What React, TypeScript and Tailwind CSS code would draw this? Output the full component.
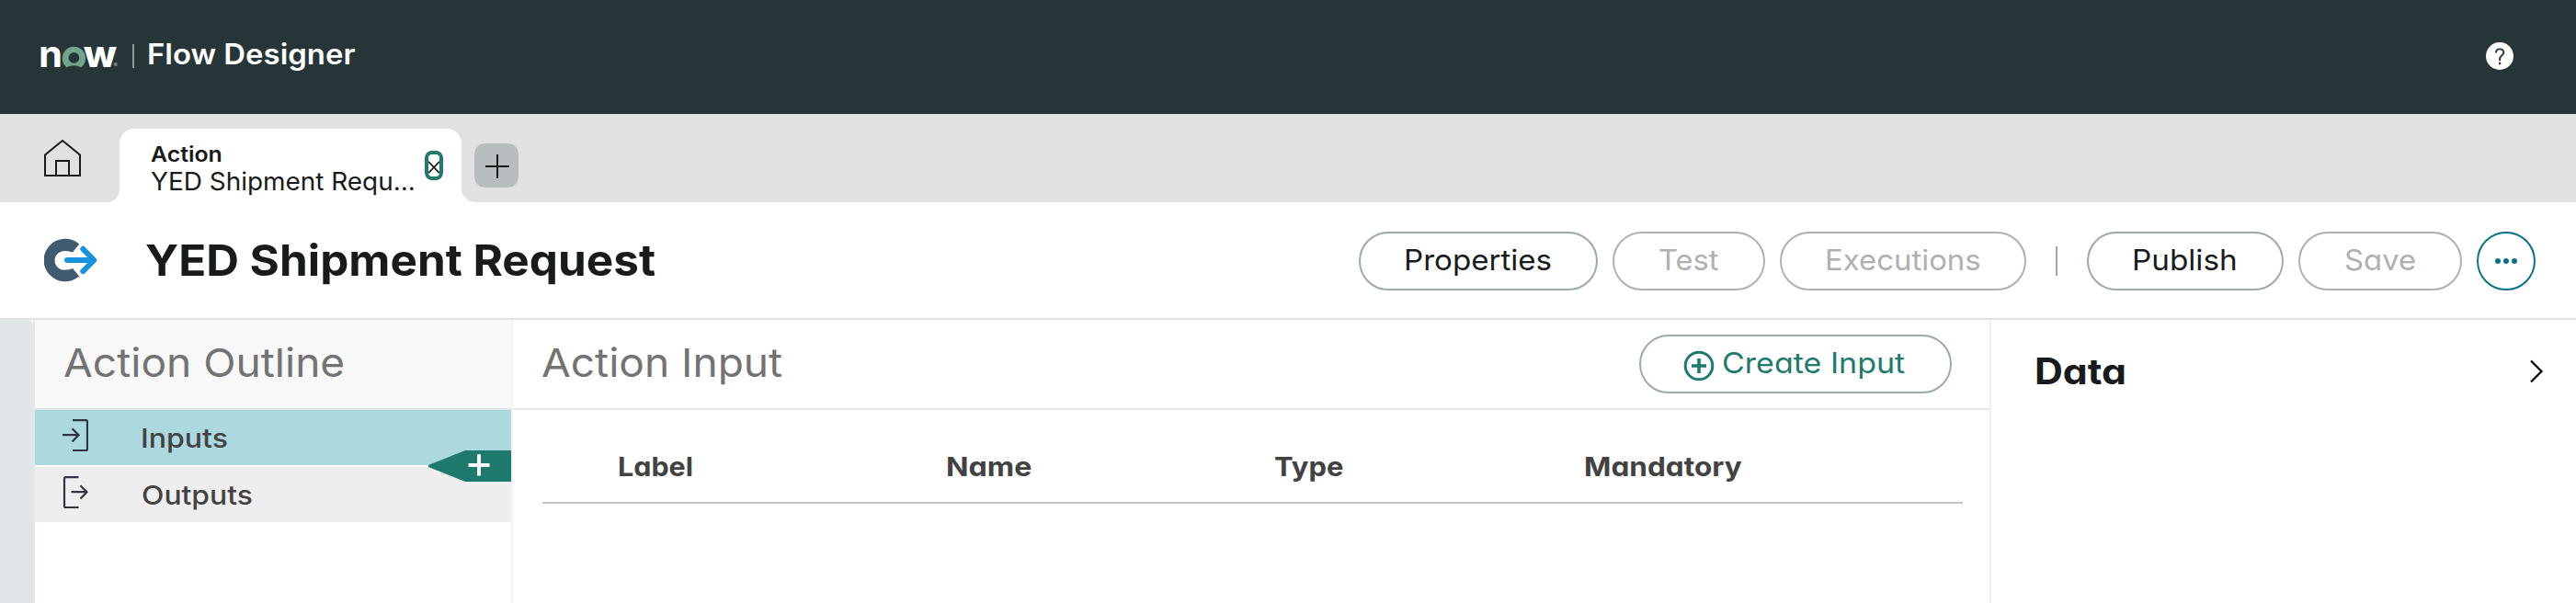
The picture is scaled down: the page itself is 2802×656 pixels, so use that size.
import React from "react";
import type { ReactNode } from "react";

function NowLogo() {
  return (
    <svg width="98" height="70" viewBox="-6 -20 98 70" className="block shrink-0">
      <text x="-2" y="25" fill="#fff" fontFamily="Inter, sans-serif" fontSize="40" fontWeight="700" textLength="26" lengthAdjust="spacingAndGlyphs">n</text>
      <text x="47" y="25" fill="#fff" fontFamily="Inter, sans-serif" fontSize="40" fontWeight="800" textLength="36" lengthAdjust="spacingAndGlyphs">w</text>
      <path
        fillRule="evenodd"
        fill="#71a68a"
        d="M28.4 25.2 A12.6 12.6 0 1 1 44.4 25.2 Q36.4 21.2 28.4 25.2 Z M36.4 9 A5.9 5.9 0 1 0 36.4 20.8 A5.9 5.9 0 1 0 36.4 9 Z"
      />
      <text x="79.5" y="25" fill="#a8b0b1" fontFamily="Inter, sans-serif" fontSize="6.5">®</text>
    </svg>
  );
}

function TopBar() {
  return (
    <header className="flex h-[124px] items-start justify-between bg-[#253538] pl-[38px] pr-[68px]">
      <div className="flex">
        <div className="mt-[28px]"><NowLogo /></div>
        <div className="ml-[8px] mt-[48px] h-[26px] w-[2px] bg-[#8f9799]" />
        <span className="ml-[14px] mt-[39px] origin-left scale-x-[1.061] text-[31px] font-semibold leading-[40px] text-white">Flow Designer</span>
      </div>
      <div className="mt-[46px]">
        <svg width="30" height="30" viewBox="0 0 30 30" className="block">
          <circle cx="15" cy="15" r="15" fill="#fff" />
          <path d="M10.9 11.6 C10.9 8.9 12.6 7.4 15 7.4 C17.5 7.4 19.3 9 19.3 11.2 C19.3 12.7 18.5 13.6 17.2 14.6 C15.7 15.8 15.1 16.6 15.1 18.2 V20.2" fill="none" stroke="#253538" strokeWidth="1.9" />
          <rect x="14" y="21.8" width="2.2" height="2.4" fill="#253538" />
        </svg>
      </div>
    </header>
  );
}

function TabBar() {
  return (
    <nav className="flex h-[96px] bg-[#e0e1e3]">
      <div className="flex w-[130px] bg-white">
        <div className="w-[130px] rounded-br-[14px] bg-[#e0e1e3] pl-[48px] pt-[28px]">
          <svg width="40" height="40" viewBox="0 0 40 40" className="block" fill="none" stroke="#181b1c" strokeWidth="2">
            <path d="M1 39 V16.5 L20 1 L39 16.5 V39 Z" />
            <path d="M13 39 V23 H27 V39" />
          </svg>
        </div>
      </div>
      <div className="flex flex-1 bg-[linear-gradient(#e0e1e3_50%,#fff_50%)]">
        <div className="mt-[16px] flex h-[80px] w-[372px] rounded-t-[16px] bg-white pl-[34px]">
          <div className="flex w-[298px] flex-col items-start pt-[12px]">
            <span className="origin-left scale-x-[1.079] text-[23px] font-semibold leading-[32px]">Action</span>
            <span className="-mt-px origin-left scale-x-[1.034] whitespace-nowrap text-[27px] leading-[30px]">YED Shipment Requ...</span>
          </div>
          <div className="mt-[24px] flex h-[32px] w-[20px] items-center justify-center rounded-[8px] border-4 border-[#1f7a6c]">
            <svg width="12" height="14" viewBox="0 0 12 14" className="block translate-y-[2px]" stroke="#181b1c" strokeWidth="1.8" fill="none">
              <path d="M0 0.8 L12 13.2 M12 0.8 L0 13.2" />
            </svg>
          </div>
        </div>
        <div className="flex-1 rounded-bl-[15px] bg-[#e0e1e3] pl-[14px] pt-[32px]">
          <div className="flex h-[48px] w-[48px] items-center justify-center rounded-[12px] bg-[#b7bcbf]">
            <svg width="26" height="26" viewBox="0 0 26 26" className="block translate-x-[1px] translate-y-[1px]" stroke="#181b1c" strokeWidth="2">
              <path d="M13 0 V26 M0 13 H26" />
            </svg>
          </div>
        </div>
      </div>
    </nav>
  );
}

function ActionLogo() {
  return (
    <svg width="58" height="48" viewBox="0 0 58 48" className="block shrink-0">
      <path d="M38.2 6.4 A23.3 23.3 0 1 0 38.2 41.6 L31 33.1 Q27.5 34.6 23.4 34.6 A10.4 10.4 0 1 1 23.4 14 Q27.5 14 31 15.5 Z" fill="#405b70" />
      <path d="M25 24 H54 M42.3 11.8 L54.2 24 L42.3 36.2" fill="none" stroke="#1894df" strokeWidth="6" strokeLinecap="round" strokeLinejoin="round" />
    </svg>
  );
}

function Pill({ className, label, stretch }: { className: string; label: ReactNode; stretch: string }) {
  return (
    <button className={`flex h-[64px] shrink-0 items-center justify-start rounded-full border-2 pb-[2px] text-[31px] leading-[40px] ${className}`}>
      <span className={`block origin-left ${stretch}`}>{label}</span>
    </button>
  );
}

function Toolbar() {
  return (
    <div className="flex h-[128px] items-start border-b-2 border-[#e0e1e3] bg-white pl-[48px] pr-[44px]">
      <div className="mt-[39px]"><ActionLogo /></div>
      <h1 className="ml-[52px] mt-[33px] origin-left scale-x-[1.052] whitespace-nowrap text-[47px] font-bold leading-[60px]">YED Shipment Request</h1>
      <div className="ml-auto mt-[32px] flex items-center">
        <Pill className="w-[260px] border-[#9daaaa] pl-[47px]" stretch="scale-x-[1.068]" label="Properties" />
        <Pill className="ml-[16px] w-[166px] border-[#b0b0b0] pl-[48px] text-[#b0b0b0]" stretch="scale-x-[1.05]" label="Test" />
        <Pill className="ml-[16px] w-[268px] border-[#b0b0b0] pl-[47px] text-[#b0b0b0]" stretch="scale-x-[1.061]" label="Executions" />
        <div className="ml-[32px] h-[32px] w-[2px] bg-[#9daaaa]" />
        <Pill className="ml-[32px] w-[214px] border-[#9daaaa] pl-[47px]" stretch="scale-x-[1.073]" label="Publish" />
        <Pill className="ml-[16px] w-[178px] border-[#b0b0b0] pl-[48px] text-[#b0b0b0]" stretch="scale-x-[1.06]" label="Save" />
        <button className="ml-[16px] flex h-[64px] w-[64px] items-center justify-center rounded-full border-2 border-[#0a7189]">
          <svg width="24" height="6" viewBox="0 0 24 6" className="block" fill="#0a7189">
            <circle cx="3" cy="3" r="3" />
            <circle cx="12" cy="3" r="3" />
            <circle cx="21" cy="3" r="3" />
          </svg>
        </button>
      </div>
    </div>
  );
}

function Outline() {
  return (
    <aside className="flex w-[520px] shrink-0 flex-col border-r-2 border-[#f3f3f3]">
      <div className="flex h-[98px] items-start border-b-2 border-[#e0e5e8] bg-[#f8f8f8]">
        <h2 className="ml-[31px] mt-[16px] origin-left scale-x-[1.072] text-[43px] leading-[60px] text-[#737373]">Action Outline</h2>
      </div>
      <div className="relative flex flex-col gap-[2px] text-[29px] font-medium leading-[40px] text-[#424242]">
        <div className="flex h-[60px] items-start bg-[#acd8e0] pl-[30px]">
          <svg width="28" height="36" viewBox="0 0 28 36" className="mt-[10px] block" fill="none" stroke="#2e3440" strokeWidth="2.2">
            <path d="M11 1.2 H25.5 Q27 1.2 27 2.7 V32.5 Q27 34 25.5 34 H11" />
            <path d="M0 17.2 H18 M10.5 10.2 L17.5 17.2 L10.5 24.4" />
          </svg>
          <span className="ml-[57px] mt-[11px] origin-left scale-x-[1.104]">Inputs</span>
        </div>
        <div className="flex h-[60px] items-start bg-[#eeeeee] pl-[30px]">
          <svg width="28" height="36" viewBox="0 0 28 36" className="mt-[10px] block" fill="none" stroke="#2e3440" strokeWidth="2.2">
            <path d="M17.5 1.2 H3.5 Q2 1.2 2 2.7 V32.5 Q2 34 3.5 34 H17.5" />
            <path d="M9.5 17.2 H27 M19.5 10.2 L26.5 17.2 L19.5 24.4" />
          </svg>
          <span className="ml-[58px] mt-[11px] origin-left scale-x-[1.097]">Outputs</span>
        </div>
        <svg width="90" height="34" viewBox="0 0 90 34" className="absolute right-0 top-[44px] block">
          <path d="M0 16 L40 0 H90 V34 H40 L0 18 Z" fill="#1e7a6c" />
          <path d="M55 4.3 V27.5 M43.5 16 H66.5" stroke="#fff" strokeWidth="4" />
        </svg>
      </div>
    </aside>
  );
}

function InputTable() {
  return (
    <main className="flex w-[1608px] shrink-0 flex-col border-r-2 border-[#f0f0f1]">
      <div className="flex h-[98px] items-start justify-between border-b-2 border-[#e0e5e8] pl-[31px] pr-[41px]">
        <h2 className="mt-[16px] origin-left scale-x-[1.071] whitespace-nowrap text-[43px] leading-[60px] text-[#737373]">Action Input</h2>
        <button className="mt-[16px] flex h-[64px] w-[340px] items-center rounded-full border-2 border-[#9daaaa] pl-[46px] text-[31px] leading-[40px] text-[#1e7a6c]">
          <svg width="34" height="34" viewBox="0 0 34 34" className="block translate-y-[2px]" fill="none" stroke="#1e7a6c">
            <circle cx="17" cy="17" r="14.8" strokeWidth="3" />
            <path d="M17 9 V25 M9 17 H25" strokeWidth="3.6" />
          </svg>
          <span className="ml-[8px] origin-left scale-x-[1.097] pb-[2px]">Create Input</span>
        </button>
      </div>
      <div className="ml-[32px] mt-[23px] flex h-[79px] w-[1545px] items-start border-b-2 border-[#c4c4c4] pl-[82px] pt-[19px] text-[29px] font-bold leading-[40px] text-[#424242]">
        <div className="w-[357px]"><span className="inline-block origin-left scale-x-[1.05]">Label</span></div>
        <div className="w-[357px]"><span className="inline-block origin-left scale-x-[1.11]">Name</span></div>
        <div className="w-[337px]"><span className="inline-block origin-left scale-x-[1.068]">Type</span></div>
        <div><span className="inline-block origin-left scale-x-[1.088]">Mandatory</span></div>
      </div>
    </main>
  );
}

function DataPanel() {
  return (
    <section className="flex flex-1 items-start justify-between pl-[47px] pr-[35px]">
      <h2 className="mt-[26px] origin-left scale-x-[1.096] text-[39px] font-bold leading-[60px]">Data</h2>
      <svg width="16" height="26" viewBox="0 0 16 26" className="mt-[43px] block" fill="none" stroke="#000" strokeWidth="2.2">
        <path d="M2 1.5 L13.5 13 L2 24.5" />
      </svg>
    </section>
  );
}

export default function App() {
  return (
    <div className="flex h-[656px] w-[2802px] flex-col overflow-hidden bg-white font-['Inter',sans-serif] text-[#181b1c] [font-feature-settings:'cv11']">
      <TopBar />
      <TabBar />
      <Toolbar />
      <div className="flex flex-1">
        <div className="w-[36px] shrink-0 rounded-tr-[6px] bg-[#e0e5e8]" />
        <div className="w-[2px] shrink-0 bg-[#e3e7e9]" />
        <Outline />
        <InputTable />
        <DataPanel />
      </div>
    </div>
  );
}
